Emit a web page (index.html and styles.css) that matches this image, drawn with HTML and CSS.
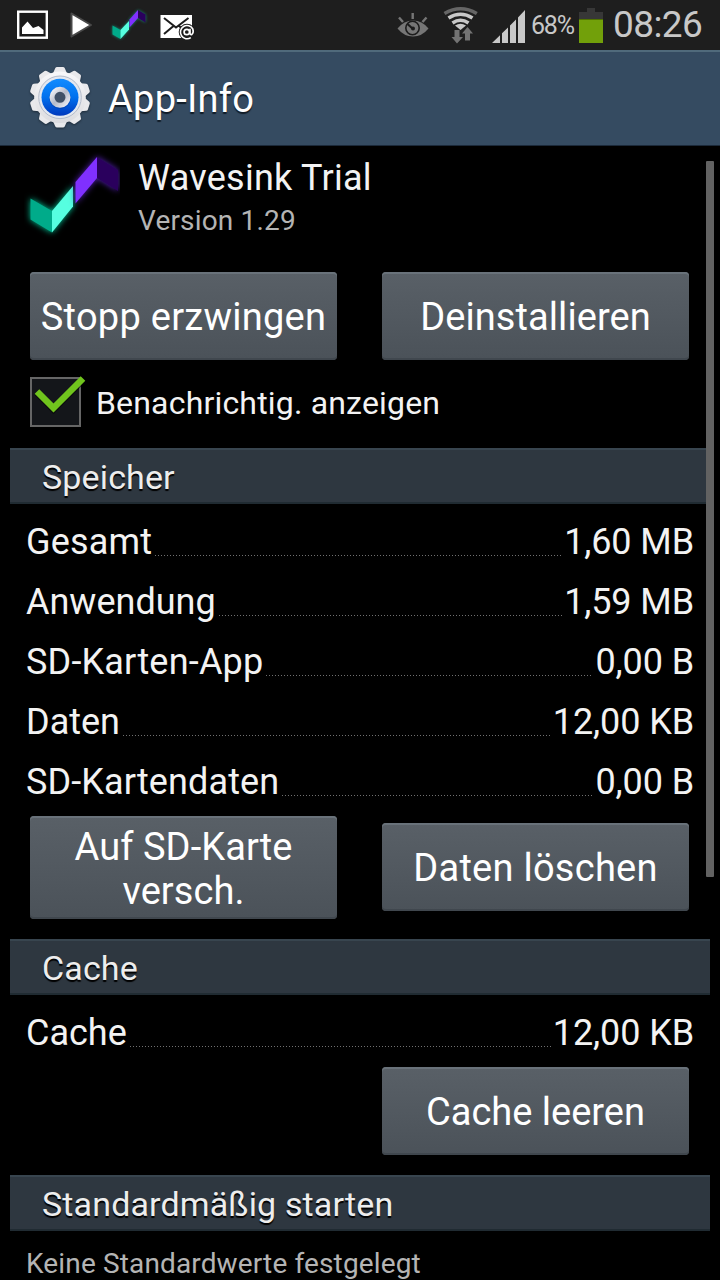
FILE: index.html
```html
<!DOCTYPE html>
<html lang="de">
<head>
<meta charset="utf-8">
<title>App-Info</title>
<link rel="stylesheet" href="styles.css">
</head>
<body>
<div class="screen">
  <div class="statusbar">
    <svg class="notifications" width="220" height="50" viewBox="0 0 220 50">
      <rect x="18.200" y="11.700" width="28.600" height="26" fill="#1a1a1a" stroke="#fff" stroke-width="2.400"/>
      <path d="M22 34V27.500L27.500 21.500L33 28L38.500 26L43.500 30V34Z" fill="#fff"/>
      <path d="M71.500 13.500L91 25L71.500 36.500Z" fill="#fff" stroke="#484848" stroke-width="2" stroke-linejoin="round"/>
      <g class="logo-glow-small">
        <path d="M112.500 25.500L120.500 30V39L112.500 34.500Z" fill="#00ab8a"/>
        <path d="M120.500 30L129 21V29.500L120.500 39Z" fill="#56ffe0"/>
        <path d="M129.500 19.500L138 10V18L129.500 27.500Z" fill="#8030ff"/>
        <path d="M138 10L145.500 14.500V22.500L138 18Z" fill="#2a005d"/>
      </g>
      <rect x="160.500" y="15" width="31.500" height="23" fill="#fff"/>
      <path d="M164 18L176 27.500L188.500 18M164 34L173.500 26M179 26L184 30" fill="none" stroke="#1c1c1c" stroke-width="2"/>
      <circle cx="187" cy="32" r="8.300" fill="#1c1c1c"/>
      <circle cx="186.800" cy="32" r="2.700" fill="none" stroke="#fff" stroke-width="1.700"/>
      <path d="M190 28.800V33Q190.200 35.200 191.800 34.500Q194 32.500 192.800 29A6.600 6.600 0 1 0 190.800 37.600" fill="none" stroke="#fff" stroke-width="1.600"/>
    </svg>
    <div class="indicators">
      <svg width="136" height="50" viewBox="392 0 136 50">
        <path d="M397.500 28.500Q404 20.500 413 20.500T428.500 28.500Q422 36.500 413 36.500T397.500 28.500Z" fill="#767676"/>
        <circle cx="412.500" cy="28" r="6.700" fill="#767676" stroke="#1c1c1c" stroke-width="1.600"/>
        <path d="M407.500 24L413 29" stroke="#1c1c1c" stroke-width="2.200"/>
        <circle cx="413" cy="28.500" r="2" fill="#1c1c1c"/>
        <path d="M412.700 13V19M399 17.500L403 22M426.500 17.500L422.500 22" stroke="#767676" stroke-width="2.400"/>
        <g fill="none" stroke="#c8c8c8" stroke-width="3.600">
          <path d="M444.500 13.500Q460.500 4 476.800 13.500" stroke="#666"/>
          <path d="M448.500 18Q460.500 10.500 472.500 18"/>
          <path d="M452.500 23Q460.500 17.500 468.500 23"/>
        </g>
        <path d="M455 25.500Q460.500 22 466 25.500L460.500 30Z" fill="#c8c8c8"/>
        <path d="M454.500 30H459.500V37H463L457 43.500L451.500 37H454.500Z" fill="#737373"/>
        <path d="M465 40.500H470V33.500H473L467.500 27L462 33.500H465Z" fill="#737373"/>
        <path d="M492 43L500 35.300V43ZM502 33.300L508 27.500V43H502ZM510 25.500L516 19.500V43H510ZM518 17.500L525 10V43H518Z" fill="#c8c8c8"/>
      </svg>
      <span class="battery-percent">68%</span>
      <svg class="battery" width="24" height="50" viewBox="579 0 24 50">
        <path d="M587 8H595V12H603V20H579V12H587Z" fill="#373737"/>
        <path d="M579 19.500H603V43H579Z" fill="#72a00a"/>
        <path d="M579 19H603V20H579Z" fill="#507200"/>
      </svg>
      <span class="clock">08:26</span>
    </div>
  </div>

  <div class="actionbar">
    <svg class="gear" width="64" height="64" viewBox="-32 -31.300 64 64">
      <defs>
        <linearGradient id="metal" x1="0" y1="0" x2="0" y2="1"><stop offset="0" stop-color="#f8f8fa"/><stop offset="1" stop-color="#dcdce0"/></linearGradient>
        <linearGradient id="blue" x1="0" y1="0" x2="0" y2="1"><stop offset="0" stop-color="#128cff"/><stop offset=".5" stop-color="#0070ee"/><stop offset="1" stop-color="#0038bd"/></linearGradient>
        <linearGradient id="ring" x1="0" y1="0" x2="1" y2="1"><stop offset="0" stop-color="#f4f4f8"/><stop offset=".5" stop-color="#b5bac9"/><stop offset="1" stop-color="#ededf3"/></linearGradient>
        <path id="tooth" d="M-7 -24L-4.700 -29.200Q-4.200 -30.300 -3 -30.300H3Q4.200 -30.300 4.700 -29.200L7 -24Z"/>
      </defs>
      <g class="teeth" fill="#e9e9ec">
        <use href="#tooth"/><use href="#tooth" transform="rotate(36)"/><use href="#tooth" transform="rotate(72)"/><use href="#tooth" transform="rotate(108)"/><use href="#tooth" transform="rotate(144)"/><use href="#tooth" transform="rotate(180)"/><use href="#tooth" transform="rotate(216)"/><use href="#tooth" transform="rotate(252)"/><use href="#tooth" transform="rotate(288)"/><use href="#tooth" transform="rotate(324)"/>
        <circle r="25.800" fill="url(#metal)"/>
      </g>
      <circle r="21.300" fill="#e4e8f0" stroke="#b4bccb" stroke-width="1"/>
      <circle r="18.500" fill="url(#blue)"/>
      <circle r="8.200" cy="1" fill="none" stroke="#003ba5" stroke-opacity=".5" stroke-width="5"/>
      <circle r="8" fill="#405067" stroke="url(#ring)" stroke-width="5"/>
    </svg>
    <h1 class="page-title">App-Info</h1>
  </div>

  <main class="content">
    <div class="app">
      <svg class="app-icon" width="96" height="96" viewBox="24 146 96 96">
        <g class="logo-glow-teal">
          <path d="M30.500 198.500L52 211V232.500L30.500 219.500Z" fill="#00ab8a"/>
          <path d="M52 211L73 186V206.500L52 232.500Z" fill="#56ffe0"/>
        </g>
        <g class="logo-glow-violet">
          <path d="M75.500 182L97 157V178L75.500 203.500Z" fill="#8030ff"/>
          <path d="M97 157L118 170V191L97 178Z" fill="#2a005d"/>
        </g>
      </svg>
      <div class="app-text">
        <div class="app-name">Wavesink Trial</div>
        <div class="app-version">Version 1.29</div>
      </div>
    </div>

    <div class="buttons">
      <button class="button force-stop">Stopp erzwingen</button>
      <button class="button uninstall">Deinstallieren</button>
    </div>

    <label class="notify">
      <svg width="58" height="54" viewBox="29 374 58 54">
        <rect x="31" y="378" width="49" height="48" fill="#14161a" stroke="#666" stroke-width="2"/>
        <path d="M37 391.500L53.500 408L83 378.500" fill="none" stroke="#050505" stroke-width="6" opacity=".6" transform="translate(0 2)"/>
        <path d="M37 391.500L53.500 408L83 378.500" fill="none" stroke="#70c41d" stroke-width="6.500"/>
      </svg>
      <span class="notify-text">Benachrichtig. anzeigen</span>
    </label>

    <h2 class="section storage">Speicher</h2>
    <div class="rows">
      <div class="row"><span class="r-total">Gesamt</span><i class="leader"></i><span class="value">1,60 MB</span></div>
      <div class="row"><span class="r-app">Anwendung</span><i class="leader"></i><span class="value">1,59 MB</span></div>
      <div class="row"><span class="r-sdapp">SD-Karten-App</span><i class="leader"></i><span class="value">0,00 B</span></div>
      <div class="row"><span class="r-data">Daten</span><i class="leader"></i><span class="value">12,00 KB</span></div>
      <div class="row"><span class="r-sddata">SD-Kartendaten</span><i class="leader"></i><span class="value">0,00 B</span></div>
    </div>
    <div class="buttons data-buttons">
      <button class="button tall move">Auf SD-Karte<br>versch.</button>
      <button class="button clear-data">Daten löschen</button>
    </div>

    <h2 class="section cache">Cache</h2>
    <div class="rows">
      <div class="row"><span class="r-cache">Cache</span><i class="leader"></i><span class="value">12,00 KB</span></div>
    </div>
    <div class="buttons cache-buttons">
      <button class="button clear-cache">Cache leeren</button>
    </div>

    <h2 class="section defaults">Standardmäßig starten</h2>
    <p class="defaults-text">Keine Standardwerte festgelegt</p>
  </main>
  <div class="scrollbar"></div>
</div>
</body>
</html>
```
FILE: styles.css
```css
* { box-sizing: border-box; }
body { margin: 0; background: #000; }
.screen {
  position: relative;
  width: 720px;
  height: 1280px;
  overflow: hidden;
  background: #000;
  color: #f3f3f3;
  font-family: Roboto, "Liberation Sans", sans-serif;
  font-size: 36px;
  white-space: nowrap;
}
svg { display: block; flex: none; }
h1, h2, p { margin: 0; font-weight: 400; }

.statusbar {
  display: flex;
  justify-content: space-between;
  height: 50px;
  background: #1e1e1e;
  color: #c8c8c8;
}
.indicators { display: flex; width: 328px; }
.battery-percent { width: 48px; padding-left: 3px; font-size: 25px; line-height: 52px; letter-spacing: -1.2px; }
.battery { margin-left: 3px; }
.clock { margin-left: 10px; font-size: 37px; line-height: 50px; letter-spacing: -.6px; }

.actionbar {
  display: flex;
  align-items: center;
  height: 96px;
  padding: 0 0 2px 28px;
  background: #354b61;
  border-top: 2px solid #506a7b;
  border-bottom: 1px solid #1b2939;
}
.teeth { filter: drop-shadow(0 1px 1px #1c2a38); }
.page-title {
  margin-left: 16px;
  padding-top: 2px;
  color: #fff;
  font-size: 38px;
  line-height: 60px;
  letter-spacing: .25px;
  text-shadow: 0 2px 1px #111c27;
}

.content { padding: 0 10px; }
.app { display: flex; height: 126px; padding-left: 14px; }
.logo-glow-teal { filter: drop-shadow(0 0 3px #00c99b); }
.logo-glow-violet { filter: drop-shadow(0 0 3px #5420b5); }
.logo-glow-small { filter: drop-shadow(0 0 1.5px #168c75); }
.app-text { margin-left: 18px; padding-top: 9px; }
.app-name { line-height: 46px; letter-spacing: .27px; }
.app-version { color: #b4b4b4; font-size: 28px; line-height: 40px; letter-spacing: .17px; }

.buttons {
  display: flex;
  justify-content: space-between;
  align-items: center;
  padding: 0 21px 0 20px;
}
.button {
  width: 307px;
  height: 88px;
  padding: 2px 0 0;
  border: 0;
  border-radius: 4px;
  background: linear-gradient(#596067, #4b5259);
  box-shadow: inset 0 2px #69727a, inset 0 -2px #40474e;
  color: #fff;
  font: 38px/44px Roboto, "Liberation Sans", sans-serif;
}
.tall { height: 103px; }
.force-stop, .clear-data { letter-spacing: .26px; }
.uninstall, .move { letter-spacing: .08px; }
.data-buttons { align-items: flex-start; margin-top: 4px; }
.clear-data { margin-top: 7px; }
.cache-buttons { justify-content: flex-end; margin-top: 4px; }

.notify { display: flex; height: 68px; margin: 14px 0 6px; padding-left: 19px; }
.notify-text { margin-left: 9px; font-size: 32px; line-height: 58px; letter-spacing: .18px; }

.section {
  height: 56px;
  padding-left: 32px;
  background: #2e3740;
  border-top: 2px solid #38454f;
  border-bottom: 2px solid #202b32;
  color: #ededed;
  font-size: 34px;
  line-height: 54px;
  letter-spacing: .14px;
  text-shadow: 0 2px 1px #000;
}
.cache, .defaults { margin-top: 20px; }
.rows { padding: 8px 16px 0 16px; }
.row { display: flex; height: 60px; line-height: 60px; }
.r-total, .r-sdapp { letter-spacing: .2px; }
.r-sddata { letter-spacing: .12px; }
.value { letter-spacing: -.1px; }
.leader {
  flex: 1;
  height: 1px;
  margin: 43px 2px 0 3px;
  background: repeating-linear-gradient(90deg, #707070 0 1px, transparent 1px 3px);
}
.defaults-text {
  padding: 12px 0 0 16px;
  color: #b4b4b4;
  font-size: 28px;
  line-height: 42px;
  letter-spacing: .14px;
}

.scrollbar {
  position: absolute;
  top: 161px;
  right: 6px;
  width: 8px;
  height: 716px;
  border-radius: 1px;
  background: #626262;
}
```
